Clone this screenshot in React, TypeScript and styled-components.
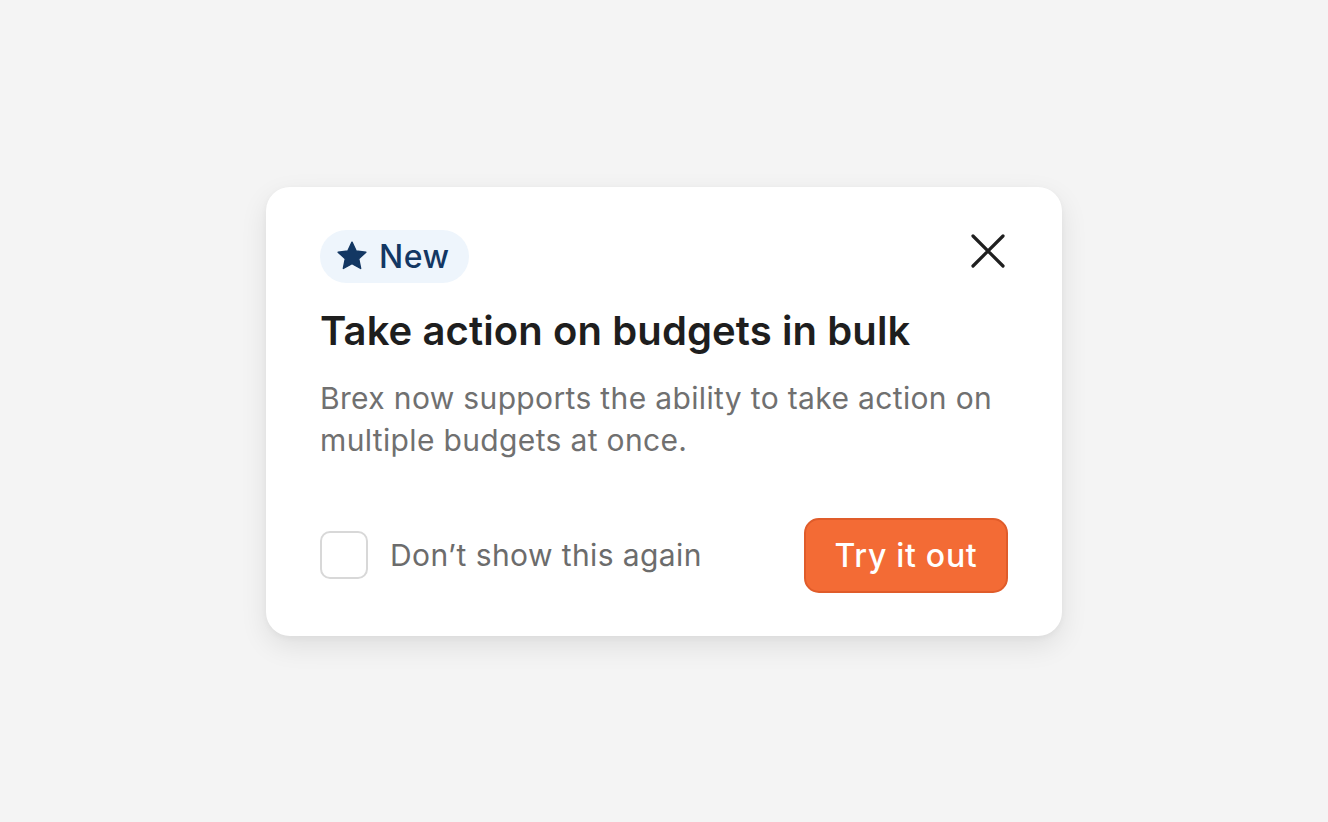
import styled, { createGlobalStyle } from 'styled-components'

const Global = createGlobalStyle`
  html, body {
    margin: 0;
    padding: 0;
    background: #f4f4f4;
  }
  body {
    font-family: Inter, "Noto Sans", sans-serif;
  }
`

const Page = styled.div`
  width: 100%;
  height: 822px;
  display: flex;
  align-items: center;
  justify-content: center;
`

const Card = styled.div`
  width: 796px;
  box-sizing: border-box;
  padding: 43px 54px;
  background: #ffffff;
  border-radius: 24px;
  box-shadow: 0 10px 28px rgba(0, 0, 0, 0.09), 0 2px 6px rgba(0, 0, 0, 0.04);
`

const Header = styled.div`
  display: flex;
  justify-content: space-between;
  align-items: flex-start;
`

const Badge = styled.div`
  display: flex;
  align-items: center;
  gap: 10px;
  height: 53px;
  padding: 0 19px 0 15px;
  border-radius: 27px;
  background: #eef5fc;
  color: #133763;
  font-size: 32px;
  font-weight: 500;
  letter-spacing: 0.5px;
`

const Close = styled.button`
  border: none;
  background: none;
  padding: 0;
  margin: 2px 1px 0 0;
  width: 38px;
  height: 38px;
  display: flex;
  align-items: center;
  justify-content: center;
  cursor: pointer;
`

const Title = styled.h1`
  margin: 24px 0 0;
  font-size: 40px;
  line-height: 48px;
  font-weight: 600;
  color: #1e1e1e;
  letter-spacing: 0.1px;
`

const Body = styled.p`
  margin: 22px 0 0;
  font-size: 30px;
  line-height: 42px;
  color: #707070;
  font-weight: 400;
  letter-spacing: 0.35px;
`

const Footer = styled.div`
  margin-top: 57px;
  display: flex;
  justify-content: space-between;
  align-items: center;
`

const Check = styled.label`
  display: flex;
  align-items: center;
  gap: 22px;
  font-size: 30px;
  color: #6c6c6c;
  letter-spacing: 0.4px;
  cursor: pointer;
`

const Box = styled.span`
  width: 48px;
  height: 48px;
  box-sizing: border-box;
  border: 2px solid #d8d8d8;
  border-radius: 10px;
  background: #fff;
`

const Primary = styled.button`
  width: 204px;
  height: 75px;
  border-radius: 15px;
  border: 2px solid #e05c2a;
  background: #f36b35;
  color: #ffffff;
  font-family: Inter, "Noto Sans", sans-serif;
  font-size: 32px;
  font-weight: 500;
  letter-spacing: 0.7px;
  cursor: pointer;
`

const App = () => {
  return (
    <>
      <Global />
      <Page>
        <Card>
          <Header>
            <Badge>
              <svg width="34" height="34" viewBox="0 0 24 24">
                <path
                  d="M12 2.2l2.95 6.3 6.85.8-5.05 4.7 1.35 6.8L12 17.4l-6.1 3.4 1.35-6.8L2.2 9.3l6.85-.8z"
                  fill="#133763"
                  stroke="#133763"
                  strokeWidth="1"
                  strokeLinejoin="round"
                />
              </svg>
              New
            </Badge>
            <Close aria-label="Close">
              <svg width="34" height="34" viewBox="0 0 34 34">
                <path d="M2 2L32 32M32 2L2 32" stroke="#1f1f1f" strokeWidth="3.2" strokeLinecap="round" />
              </svg>
            </Close>
          </Header>
          <Title>Take action on budgets in bulk</Title>
          <Body>
            Brex now supports the ability to take action on
            <br />
            multiple budgets at once.
          </Body>
          <Footer>
            <Check>
              <Box />
              Don’t show this again
            </Check>
            <Primary>Try it out</Primary>
          </Footer>
        </Card>
      </Page>
    </>
  )
}

export default App
